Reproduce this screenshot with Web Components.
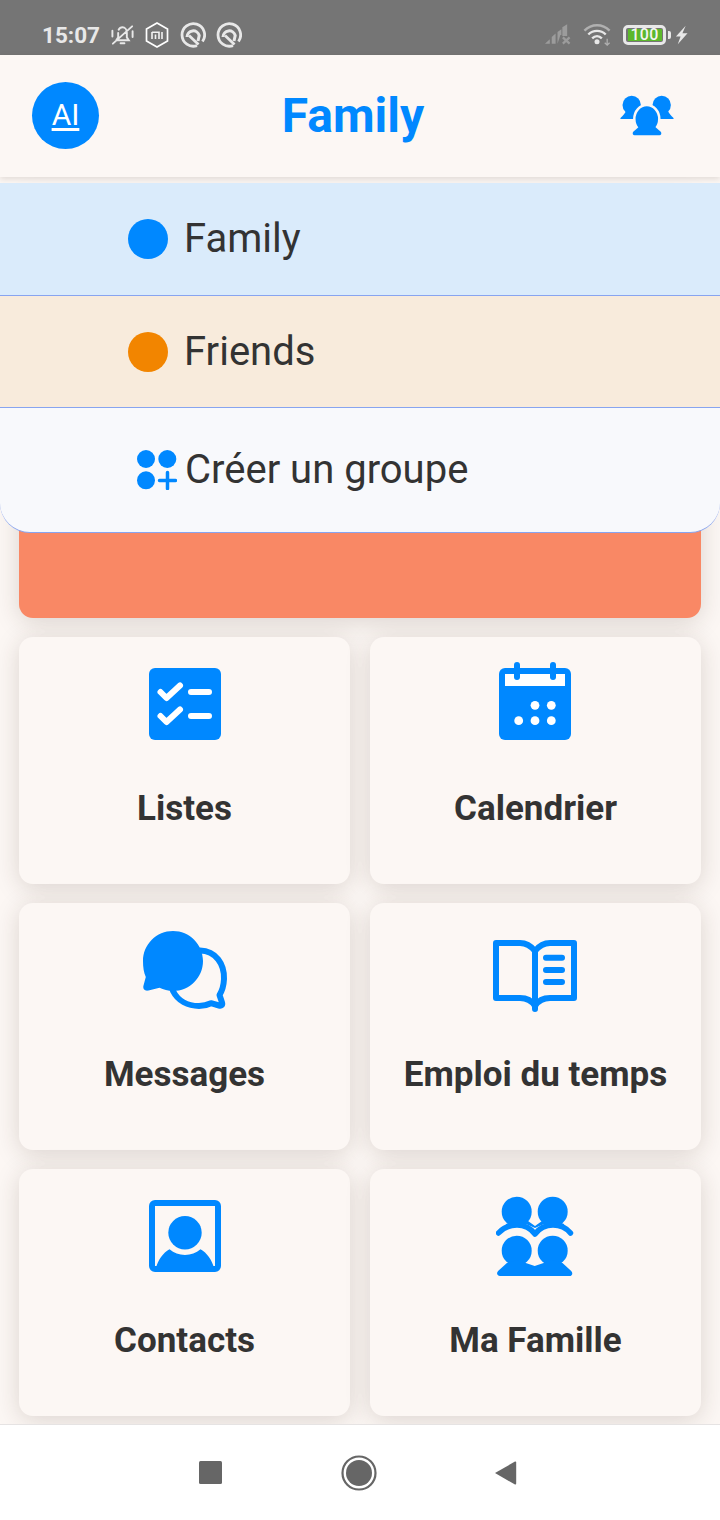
<!DOCTYPE html>
<html><head><meta charset="utf-8"><style>
html,body{margin:0;padding:0;width:720px;height:1520px;overflow:hidden;background:#fcf7f4;font-family:Roboto,"Liberation Sans",sans-serif}
</style></head><body>
<family-app>
  <status-bar slot="status"></status-bar>
  <app-header slot="header" title="Family" initials="AI"></app-header>
  <group-menu slot="menu">
    <group-row color="#0088ff" bg="#daebfb" label="Family" h="112"></group-row>
    <group-row color="#f28500" bg="#f8ebdc" label="Friends" h="111"></group-row>
    <create-row label="Créer un groupe"></create-row>
  </group-menu>
  <tile-card label="Listes" icon="list"></tile-card>
  <tile-card label="Calendrier" icon="cal"></tile-card>
  <tile-card label="Messages" icon="msg"></tile-card>
  <tile-card label="Emploi du temps" icon="book"></tile-card>
  <tile-card label="Contacts" icon="contact"></tile-card>
  <tile-card label="Ma Famille" icon="fam"></tile-card>
  <nav-bar slot="nav"></nav-bar>
</family-app>
<script>
const B='#0088ff';
function shadow(el,html){el.attachShadow({mode:'open'}).innerHTML=html;}
const ICONS={
list:`<svg width="72" height="72" viewBox="0 0 72 72"><rect width="72" height="72" rx="6" fill="${B}"/><g fill="none" stroke="#fff" stroke-width="6" stroke-linecap="round" stroke-linejoin="round"><path d="M11.5 24l6 6L31 17.5M11.5 48l6 6L31 41.5M42 24h18M42 48h18"/></g></svg>`,
cal:`<svg width="72" height="78" viewBox="0 0 72 78" style="margin:-6px 0 0 -1px"><rect y="6" width="72" height="72" rx="6" fill="${B}"/><rect x="6" y="12" width="60" height="12" fill="#fff"/><rect x="15" y="0" width="6" height="18" rx="3" fill="${B}"/><rect x="51" y="0" width="6" height="18" rx="3" fill="${B}"/><g fill="#fff"><circle cx="36" cy="43.3" r="4.4"/><circle cx="52.3" cy="43.3" r="4.4"/><circle cx="19.7" cy="58.7" r="4.4"/><circle cx="36" cy="58.7" r="4.4"/><circle cx="52.3" cy="58.7" r="4.4"/></g></svg>`,
msg:`<svg width="88" height="80" viewBox="142 930 88 80" style="margin:-4px 0 0 3px"><path d="M200 950.5C216 951 224.500 964 224 979c-.3 7-2 12-4.500 16l2.500 7.500c.8 2.500-.500 3.700-3 3l-8-2.300c-4 2-8 2.800-12 2.800-11 0-21-5-26-15" fill="none" stroke="${B}" stroke-width="6" stroke-linejoin="round" stroke-linecap="round"/><path d="M173 931c16.500 0 30 13.400 30 30s-13.500 30-30 30c-5 0-9.500-1.200-13.500-3.200l-11 2.700c-3.500.8-6-1.500-5-5l2.300-8.500C143.800 972.800 143 967 143 961c0-16.600 13.500-30 30-30z" fill="${B}"/></svg>`,
book:`<svg width="84" height="72" viewBox="493 940 84 72" style="margin:6px 0 0 -1px"><g fill="none" stroke="${B}" stroke-width="6" stroke-linecap="round" stroke-linejoin="round"><path d="M535 951c-4-5-9-8-15-8h-24v55h24c7 0 12 3 15 8 3-5 8-8 15-8h24v-55h-24c-6 0-11 3-15 8zM535 951v58M546 957.700h16M546 970h16M546 982h16"/></g></svg>`,
contact:`<svg width="72" height="72" viewBox="0 0 72 72"><rect x="3" y="3" width="66" height="66" rx="3" fill="none" stroke="${B}" stroke-width="6"/><circle cx="36" cy="32.700" r="16.700" fill="${B}"/><path d="M7 68C9 60 14 53 20.500 49.300 25 53 30 55 36 55s11-2 15.500-5.700C58 53 63 60 65 68z" fill="${B}"/></svg>`,
fam:`<svg width="80" height="80" viewBox="496 1196 80 80" style="margin:-4px 0 0 1px"><g fill="${B}"><circle cx="516.700" cy="1211.700" r="15"/><circle cx="552.700" cy="1211.700" r="15"/><circle cx="516.700" cy="1250.700" r="15"/><circle cx="552.700" cy="1250.700" r="15"/><path d="M499 1276h70.500c2.800 0 3.700-3 1.700-5l-8.700-8-10-3-17.800 6-17.800-6-10 3-8.800 8c-2 2-1 5 1.900 5z"/><path d="M506 1224l10-4h2l10 1 7 5 7-5 10-1h2l10 4v4l-12-4h-8l-9 4-9-4h-8l-12 4z"/></g><path d="M498.500 1233c5-5.500 11-8 18.500-8 7.500 0 13.500 3 18 9 4.500-6 10.500-9 18-9 7.500 0 13 2.500 17.500 8" fill="none" stroke="${B}" stroke-width="5.500" stroke-linecap="round" stroke-linejoin="round"/></svg>`
};
const Q=c=>`<svg width="26" height="26" viewBox="-13 -13 26 26" fill="none" stroke="${c}"><path d="M4 10.600A11.300 11.300 0 1 1 9.500 6.500" stroke-width="2.800"/><path d="M-6 2A6.200 6.200 0 0 1 6.200 0.500L5 6" stroke-width="3"/><path d="M-4 0.500L5.500 9.500" stroke-width="2.800"/></svg>`;
class FamilyApp extends HTMLElement{constructor(){super();shadow(this,`<style>
:host{display:flex;flex-direction:column;width:720px;height:1520px;position:relative;overflow:hidden;background:#fcf7f4}
main{flex:1;min-height:0;display:flex;flex-direction:column;gap:19px;padding:19px 19px 0;overflow:hidden}
.banner{flex:none;height:422px;background:#f98865;border-radius:14px;box-shadow:0 4px 24px rgba(60,40,30,.17)}
.grid{display:grid;grid-template-columns:331px 331px;grid-auto-rows:247px;column-gap:20px;row-gap:19px}
.over{position:absolute;left:0;top:183px;width:720px;z-index:3}
header,footer{flex:none;position:relative;z-index:2}
</style><slot name="status"></slot><header><slot name="header"></slot></header><main><div class="banner"></div><div class="grid"><slot></slot></div></main><footer><slot name="nav"></slot></footer><div class="over"><slot name="menu"></slot></div>`);}}
class StatusBar extends HTMLElement{constructor(){super();const c='#e8e8e8';shadow(this,`<style>
:host{display:flex;flex:none;height:55px;background:#757575;align-items:center;color:${c};box-sizing:border-box;padding:14px 32px 0 42px}
.t{font:700 22.500px/1 Roboto,sans-serif;width:57px;white-space:nowrap;margin-top:2px}
svg{display:block;flex:none}
.sp{flex:1}
.batt{box-sizing:border-box;width:43px;height:20px;border:3px solid ${c};border-radius:5px;padding:1px 1.500px;display:flex;margin-left:11px}
.fill{flex:1;background:#5cb82c;color:#f4f4f4;font:500 16px/12px Roboto,sans-serif;text-align:center;letter-spacing:.3px}
.nub{width:3px;height:8px;background:${c};border-radius:0 2px 2px 0;margin-left:2px}
</style><span class="t">15:07</span>
<svg width="25" height="26" viewBox="0 0 26 26" style="margin-left:11px" fill="none" stroke="${c}" stroke-width="2"><path d="M6.500 18.500h13l-2-3v-5c0-3-2-5.500-4.500-5.500-1.700 0-3.200.9-4 2.500M8.500 11v4.500l-2 3M11 21.500h4M3 22L23 4M2.500 8.500v6M23.500 9v6" stroke-linecap="round"/></svg>
<svg width="26" height="28" viewBox="0 0 26 28" style="margin-left:9px"><path d="M13 2l10.500 6v12L13 26 2.500 20V8z" fill="none" stroke="#fff" stroke-width="1.700"/><path d="M8 11.200h7v6.800M8 11v7M11.500 13.500V18M18 11v7" fill="none" stroke="#f2f2f2" stroke-width="1.600"/></svg>
<span style="margin-left:10px;display:block">${Q(c)}</span><span style="margin-left:10px;display:block">${Q(c)}</span>
<span class="sp"></span>
<svg width="28" height="21" viewBox="0 0 29 21"><g fill="#9c9c9c"><path d="M1 20l5-4.500V20zM8 20v-7l4-3.500V20zM14 20V8l4-3v6l-1 0-3 9zM19 12V3l5-3v12z"/></g><path d="M19.500 13.500l7 6.500M26.500 13.500l-7 6.500" stroke="#9c9c9c" stroke-width="2.300"/></svg>
<svg width="29" height="24" viewBox="0 0 30 24" style="margin-left:11px;margin-top:-2px" fill="none"><path d="M1.500 8.500C9 1 20 1 27.500 8.500" stroke="#b0b0b0" stroke-width="2.500"/><path d="M5.500 12.500c5-5 13-5 18 0" stroke="#e8e8e8" stroke-width="2.500"/><path d="M9.500 16.500c3-3 7-3 10 0" stroke="#e8e8e8" stroke-width="2.500"/><circle cx="14.500" cy="20" r="2.600" fill="#e8e8e8"/><path d="M25 17v6M22.500 21l2.500 2.500 2.500-2.500" stroke="#b0b0b0" stroke-width="1.300"/></svg>
<div class="batt"><div class="fill">100</div></div><div class="nub"></div>
<svg width="13" height="20" viewBox="0 0 14 20" style="margin-left:4px"><path d="M11.500 0L1 11.500h5L3 20 13.500 8h-5.500z" fill="${c}"/></svg>`);}}
class AppHeader extends HTMLElement{constructor(){super();shadow(this,`<style>
:host{display:block;height:122px;background:#fcf7f4;box-shadow:0 2px 6px rgba(60,40,30,.14);position:relative}
.bar{display:flex;align-items:center;justify-content:space-between;height:122px;box-sizing:border-box;padding:0 46px 2px 32px}
.av{width:67px;height:67px;border-radius:50%;background:${B};color:#fff;display:flex;align-items:center;justify-content:center;font:400 30px/1 Roboto,sans-serif;text-decoration:underline;text-underline-offset:3px}
h1{margin:0;font:700 48px/1 Roboto,sans-serif;color:${B};position:absolute;left:-7px;right:7px;top:37px;text-align:center}
svg{display:block;position:relative}
</style><div class="bar"><a class="av">${this.getAttribute('initials')}</a><h1>${this.getAttribute('title')}</h1>
<svg width="54" height="42" viewBox="620 92 54 42"><g fill="${B}"><circle cx="631.700" cy="103" r="9.200"/><circle cx="661.700" cy="103" r="9.200"/><path d="M620.500 116c2.500-2.500 4.500-4.500 5.500-7h12v8h-16.500c-1 0-1.500-.3-1-1zM673.500 116c-2.500-2.500-4.500-4.500-5.500-7h-12v8h16.500c1 0 1.500-.3 1-1z"/></g><g fill="${B}" stroke="#fcf7f4" stroke-width="2.500"><ellipse cx="646.800" cy="117" rx="12.500" ry="14"/></g><path d="M633 130l8-7h12l8 7c.8 1.500 0 3.300-1.500 3.300h-25c-1.500 0-2.300-1.800-1.500-3.300z" fill="${B}"/></svg></div>`);}}
class GroupMenu extends HTMLElement{constructor(){super();shadow(this,`<style>:host{display:flex;flex-direction:column}</style><slot></slot>`);}}
class GroupRow extends HTMLElement{constructor(){super();const a=n=>this.getAttribute(n);shadow(this,`<style>
:host{display:flex;align-items:center;box-sizing:border-box;height:${+a('h')+1}px;background:${a('bg')};border-bottom:1px solid #88a4f0;padding:0 0 0 128px;gap:17px;color:#333;font:400 40px/1 Roboto,sans-serif}
i{width:40px;height:40px;border-radius:50%;background:${a('color')};display:block}
span{margin:0 0 0 -1px}
</style><i></i><span>${a('label')}</span>`);}}
class CreateRow extends HTMLElement{constructor(){super();shadow(this,`<style>
:host{display:flex;align-items:center;box-sizing:border-box;height:125px;background:#f8f9fc;border-bottom:1.500px solid #88a4f0;border-radius:0 0 30px 30px;padding:0 0 0 137px;gap:8px;color:#333;font:400 40px/1 Roboto,sans-serif}
svg{display:block;margin-top:-1px}span{margin-top:0}
</style><svg width="40" height="40" viewBox="137 450 40 40"><g fill="${B}"><circle cx="146" cy="459" r="9"/><circle cx="167.300" cy="459" r="9"/><circle cx="146" cy="480.300" r="9"/></g><path d="M159.500 480.500h16M167.500 472.500v16" stroke="${B}" stroke-width="3.500" stroke-linecap="round"/></svg><span>${this.getAttribute('label')}</span>`);}}
class TileCard extends HTMLElement{constructor(){super();shadow(this,`<style>
:host{display:flex;flex-direction:column;align-items:center;background:#fcf7f4;border-radius:14px;box-shadow:0 4px 24px rgba(60,40,30,.17);box-sizing:border-box;padding-top:31px}
.ic{height:72px;display:flex;align-items:flex-start;justify-content:center}
svg{display:block;flex:none}
.l{margin-top:50px;font:700 35px/38px Roboto,sans-serif;color:#333;white-space:nowrap}
</style><div class="ic">${ICONS[this.getAttribute('icon')]}</div><div class="l">${this.getAttribute('label')}</div>`);}}
class NavBar extends HTMLElement{constructor(){super();shadow(this,`<style>
:host{display:flex;align-items:center;justify-content:flex-start;height:96px;box-sizing:border-box;background:#fff;border-top:1px solid #e6e3e3;padding:0 0 0 199px}
svg{display:block}
</style><svg width="23" height="23" viewBox="0 0 23 23"><rect width="23" height="23" rx="1.500" fill="#666"/></svg>
<svg width="36" height="36" viewBox="0 0 36 36" style="margin-left:119px"><circle cx="18" cy="18" r="16.500" fill="none" stroke="#666" stroke-width="2.200"/><circle cx="18" cy="18" r="13" fill="#666"/></svg>
<svg width="23" height="26" viewBox="0 0 23 26" style="margin-left:117px"><path d="M1 13L21 1.500c.6-.3 1.200 0 1.200 1v21c0 1-.6 1.300-1.200 1z" fill="#666"/></svg>`);}}
customElements.define('family-app',FamilyApp);customElements.define('status-bar',StatusBar);customElements.define('app-header',AppHeader);customElements.define('group-menu',GroupMenu);customElements.define('group-row',GroupRow);customElements.define('create-row',CreateRow);customElements.define('tile-card',TileCard);customElements.define('nav-bar',NavBar);
</script></body></html>
